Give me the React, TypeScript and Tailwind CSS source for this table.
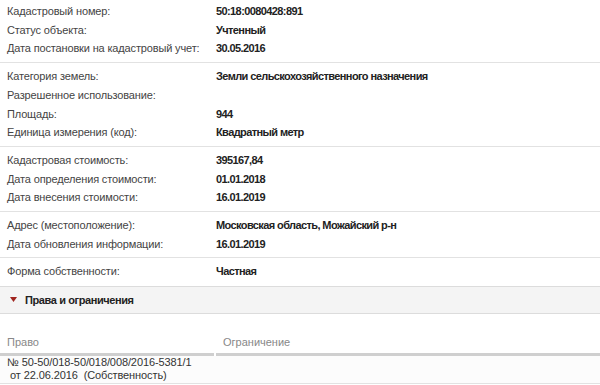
import React from 'react';

type Row = [string, string];

const groups: Row[][] = [
  [
    ['Кадастровый номер:', '50:18:0080428:891'],
    ['Статус объекта:', 'Учтенный'],
    ['Дата постановки на кадастровый учет:', '30.05.2016'],
  ],
  [
    ['Категория земель:', 'Земли сельскохозяйственного назначения'],
    ['Разрешенное использование:', ''],
    ['Площадь:', '944'],
    ['Единица измерения (код):', 'Квадратный метр'],
  ],
  [
    ['Кадастровая стоимость:', '395167,84'],
    ['Дата определения стоимости:', '01.01.2018'],
    ['Дата внесения стоимости:', '16.01.2019'],
  ],
  [
    ['Адрес (местоположение):', 'Московская область, Можайский р-н'],
    ['Дата обновления информации:', '16.01.2019'],
  ],
];

const InfoRow = ({ label, value }: { label: string; value: string }) => (
  <div className="flex items-center h-[18.7px]">
    <div className="w-[216px] pl-[7px] text-[#444] tracking-[-0.15px]">{label}</div>
    <div className="font-bold text-[#222] tracking-[-0.6px]">{value}</div>
  </div>
);

export default function App() {
  return (
    <div className="w-[600px] h-[385px] overflow-hidden bg-white text-[11px] font-['Liberation_Sans',Arial,sans-serif]">
      {groups.map((g, i) => (
        <div key={i} className={`border-b border-[#e2e2e2] ${i === 0 ? 'pt-[2px] pb-[4px]' : 'py-[4px]'}`}>
          {g.map(([l, v]) => (
            <InfoRow key={l} label={l} value={v} />
          ))}
        </div>
      ))}
      <div className="pt-[4px] pb-[5px]">
        <InfoRow label="Форма собственности:" value="Частная" />
      </div>

      {/* Rights section */}
      <div className="flex items-center h-[28px] bg-[#f4f4f4] border-y border-[#dcdcdc]">
        <svg width="7" height="5" viewBox="0 0 7 5" className="ml-[10px] mr-[8px]">
          <path d="M0 0 L7 0 L3.5 5 Z" fill="#a0251f" />
        </svg>
        <span className="font-bold text-[#222] tracking-[-0.4px]">Права и ограничения</span>
      </div>

      <div className="mt-[17px]">
        <div className="flex text-[#888]">
          <div className="w-[214px] h-[25px] flex items-center pl-[7px] border-b-[3px] border-[#cfcfcf]">Право</div>
          <div className="w-[2px]" />
          <div className="flex-1 h-[25px] flex items-center pl-[7px] border-b-[3px] border-[#cfcfcf]">Ограничение</div>
        </div>
        <div className="flex bg-[#fcfcfc] border-b border-[#e2e2e2] text-[#333]">
          <div className="w-[216px] pl-[7px] leading-[13.5px] tracking-[-0.1px]">
            <div>№ 50-50/018-50/018/008/2016-5381/1</div>
            <div className="pl-[3px]">от 22.06.2016&nbsp; (Собственность)</div>
          </div>
          <div className="flex-1" />
        </div>
      </div>
    </div>
  );
}
